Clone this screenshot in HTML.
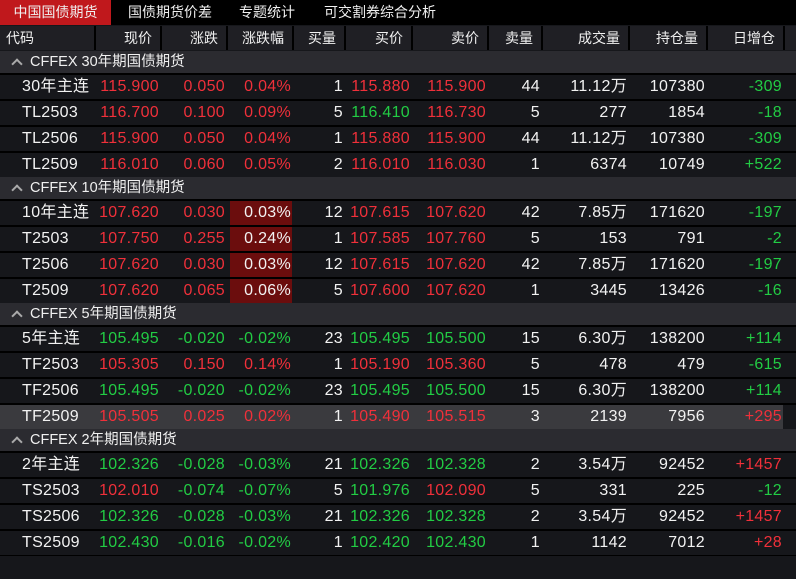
<!DOCTYPE html>
<html><head><meta charset="utf-8"><style>
*{margin:0;padding:0;box-sizing:border-box}
body{width:796px;height:579px;background:#16171b;font-family:"Liberation Sans","Noto Sans CJK SC",sans-serif;color:#e8e8e8;position:relative;overflow:hidden;font-size:16px}
.tabs{position:absolute;left:0;top:0;width:796px;height:25px;background:#000;font-size:14px}
.tab{position:absolute;top:0;height:25px;line-height:25px;color:#f0f0f0}
.hdr{position:absolute;left:0;top:26px;width:796px;height:24px;background:#000}
.hc{position:absolute;top:0;height:24px;line-height:24px;background:#1f1f24;text-align:right;padding-right:8px;font-size:14px;color:#f0f0f0}
.grp{position:absolute;left:0;width:796px;height:22px;background:#2b2b30;line-height:22px;font-size:14.5px;color:#f0f0f0;padding-left:30px}
.grp:before{content:"";position:absolute;left:13px;top:9px;width:6px;height:6px;border-left:2px solid #aaa;border-top:2px solid #aaa;transform:rotate(45deg)}
.row{position:absolute;left:0;width:783px;height:24px;line-height:24px;background:#16171b}
.row.sel{background:#3a3a3e}
.c{position:absolute;top:0;height:24px;text-align:right;white-space:nowrap;letter-spacing:0.3px}
.r{color:#f0303a}.g{color:#22cc44}.w{color:#f2f2f2}
.rb{background:#6b0d0d;color:#f2f2f2}
.sep{position:absolute;left:0;width:796px;height:2px;background:#000}
</style></head><body>
<div class="tabs">
<div class="tab" style="left:0;width:111px;background:#c0181c;text-align:center">中国国债期货</div>
<div class="tab" style="left:128px">国债期货价差</div>
<div class="tab" style="left:239px">专题统计</div>
<div class="tab" style="left:324px">可交割券综合分析</div>
</div>
<div class="hdr">
<div class="hc" style="left:0;width:94px;text-align:left;padding-left:6px">代码</div>
<div class="hc" style="left:96px;width:64px">现价</div>
<div class="hc" style="left:162px;width:64px">涨跌</div>
<div class="hc" style="left:228px;width:64px">涨跌幅</div>
<div class="hc" style="left:294px;width:50px">买量</div>
<div class="hc" style="left:346px;width:65px">买价</div>
<div class="hc" style="left:413px;width:74px">卖价</div>
<div class="hc" style="left:489px;width:52px">卖量</div>
<div class="hc" style="left:543px;width:85px">成交量</div>
<div class="hc" style="left:630px;width:76px">持仓量</div>
<div class="hc" style="left:708px;width:75px">日增仓</div>
<div class="hc" style="left:785px;width:11px"></div>
</div>
<div id="t"></div>
<script>
const groups=[
["CFFEX 30年期国债期货",[
["30年主连","r115.900","r0.050","r0.04%","1","r115.880","r115.900","44","11.12万","107380","g-309"],
["TL2503","r116.700","r0.100","r0.09%","5","g116.410","r116.730","5","277","1854","g-18"],
["TL2506","r115.900","r0.050","r0.04%","1","r115.880","r115.900","44","11.12万","107380","g-309"],
["TL2509","r116.010","r0.060","r0.05%","2","r116.010","r116.030","1","6374","10749","g+522"]]],
["CFFEX 10年期国债期货",[
["10年主连","r107.620","r0.030","b0.03%","12","r107.615","r107.620","42","7.85万","171620","g-197"],
["T2503","r107.750","r0.255","b0.24%","1","r107.585","r107.760","5","153","791","g-2"],
["T2506","r107.620","r0.030","b0.03%","12","r107.615","r107.620","42","7.85万","171620","g-197"],
["T2509","r107.620","r0.065","b0.06%","5","r107.600","r107.620","1","3445","13426","g-16"]]],
["CFFEX 5年期国债期货",[
["5年主连","g105.495","g-0.020","g-0.02%","23","g105.495","g105.500","15","6.30万","138200","g+114"],
["TF2503","r105.305","r0.150","r0.14%","1","r105.190","r105.360","5","478","479","g-615"],
["TF2506","g105.495","g-0.020","g-0.02%","23","g105.495","g105.500","15","6.30万","138200","g+114"],
["TF2509","r105.505","r0.025","r0.02%","1","r105.490","r105.515","3","2139","7956","r+295",1]]],
["CFFEX 2年期国债期货",[
["2年主连","g102.326","g-0.028","g-0.03%","21","g102.326","g102.328","2","3.54万","92452","r+1457"],
["TS2503","r102.010","g-0.074","g-0.07%","5","g101.976","r102.090","5","331","225","g-12"],
["TS2506","g102.326","g-0.028","g-0.03%","21","g102.326","g102.328","2","3.54万","92452","r+1457"],
["TS2509","g102.430","g-0.016","g-0.02%","1","g102.420","g102.430","1","1142","7012","r+28"]]]];
const cols=[[0,94],[96,64],[162,64],[228,64],[294,50],[346,65],[413,74],[489,52],[543,85],[630,76],[708,75]];
let h="";
const gtops=[51,177,303,429];
groups.forEach(([name,rows],gi)=>{
 let y=gtops[gi];
 h+=`<div class="grp" style="top:${y}px">${name}</div>`;y+=23;
 for(const r of rows){
  h+=`<div class="sep" style="top:${y-1}px"></div>`;
  h+=`<div class="row${r[11]?' sel':''}" style="top:${y+1}px">`;
  for(let i=0;i<11;i++){
   let v=r[i],cls="w";
   if(i>0&&/^[rgb]/.test(v)){cls=v[0]=='b'?'rb':v[0];v=v.slice(1);}
   const [l,w]=cols[i];
   if(i==0) h+=`<div class="c w" style="left:22px;width:80px;text-align:left">${v}</div>`;
   else if(cls=='rb') h+=`<div class="c rb" style="left:${l+2}px;width:${w-2}px;padding-right:1px">${v}</div>`;
   else h+=`<div class="c ${cls}" style="left:${l}px;width:${w-1}px">${v}</div>`;
  }
  h+=`</div>`;y+=26;
 }
 h+=`<div class="sep" style="top:${y-1}px;height:1px"></div>`;
});
document.getElementById("t").innerHTML=h;
</script>
</body></html>
